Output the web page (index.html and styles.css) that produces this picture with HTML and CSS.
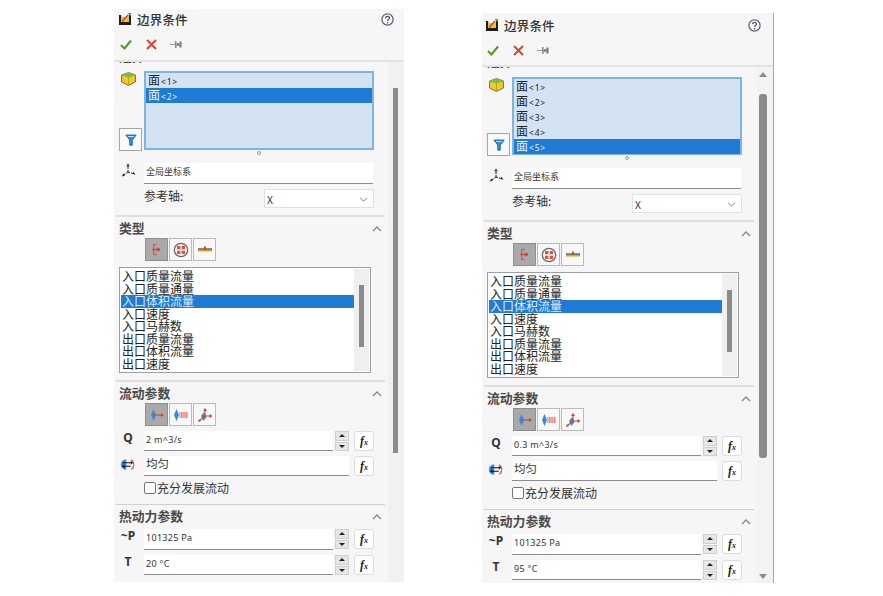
FILE: index.html
```html
<!DOCTYPE html>
<html lang="zh">
<head>
<meta charset="utf-8">
<title>边界条件</title>
<link rel="stylesheet" href="styles.css">
</head>
<body>
<svg class="defs" aria-hidden="true">
  <symbol id="i-bc" viewBox="0 0 14 13"><path d="M1 2h2.200v7h7.600V2H13v10H1z" fill="#1d1d1d"/><rect x="3.200" y="4" width="7.600" height="5" fill="#f0c419"/><path d="M4 8.500L10 2" stroke="#d9402a" stroke-width="1.400"/><path d="M9.500 0h3.500v3.500z" fill="#4fa02f"/></symbol>
  <symbol id="i-help" viewBox="0 0 13 13"><circle cx="6.500" cy="6.500" r="5.600" fill="#fff" stroke="#5c6670" stroke-width="1.300"/><path d="M4.600 5.200c0-2.500 3.900-2.500 3.900-.2 0 1.400-2 1.500-2 3" fill="none" stroke="#47525c" stroke-width="1.300"/><rect x="5.800" y="9" width="1.400" height="1.400" fill="#47525c"/></symbol>
  <symbol id="i-check" viewBox="0 0 12 11"><path d="M1 6l3.500 3.500L11 1.500" fill="none" stroke="#4f9a1f" stroke-width="2"/></symbol>
  <symbol id="i-x" viewBox="0 0 11 11"><path d="M1 1l9 9M10 1l-9 9" stroke="#d8412b" stroke-width="1.900"/></symbol>
  <symbol id="i-pin" viewBox="0 0 12 9"><path d="M0 4.500h5.500" stroke="#999" stroke-width="1"/><rect x="5" y="1" width="1.500" height="7" fill="#888"/><rect x="6.500" y="3" width="3" height="3" fill="#888"/><rect x="9.500" y="1.500" width="2" height="6" fill="#777"/></symbol>
  <symbol id="i-cube" viewBox="0 0 15 14"><path d="M7.500 .6l6.900 2.400v7l-6.900 3.500L.6 10V3z" fill="#f3c92a" stroke="#55523a" stroke-width=".8"/><path d="M7.500 .8L14.200 3 7.500 6 .8 3z" fill="#79c043"/><path d="M7.500 6v7.500" stroke="#c9a11c"/></symbol>
  <symbol id="i-filter" viewBox="0 0 12 12"><path d="M.8 1h10.400L7.300 6v5.200H4.700V6z" fill="#2f8de4" stroke="#125ea8" stroke-width=".8"/><path d="M3 2.500h6" stroke="#bfe0fb"/></symbol>
  <symbol id="i-axes" viewBox="0 0 15 15"><path d="M7 9V2M7 9l6.500 2M7 9l-5 3.500" stroke="#222" stroke-width="1" stroke-dasharray="2 1"/><path d="M7 .5L5.300 3.500h3.400zM14.500 11.500l-3-.4.8-2.300zM1 13.500l1.200-3 1.800 2z" fill="#222"/><circle cx="7" cy="9" r="1.100" fill="#c8352b"/></symbol>
  <symbol id="i-inlet" viewBox="0 0 14 14"><path d="M3.500 1.500v11M3.500 1.500h3M3.500 12.500h3" stroke="#d8412b" fill="none" stroke-width="1"/><path d="M2 7h6" stroke="#d8412b" stroke-width="1.500"/><path d="M7.500 4.500l3.500 2.500-3.500 2.500z" fill="#e2342a"/></symbol>
  <symbol id="i-fan" viewBox="0 0 16 16"><circle cx="8" cy="8" r="6.700" fill="#f4f4f4" stroke="#6a6a6a" stroke-width="1.300"/><path d="M4 4h3.400v3.300H4zM8.600 4H12v3.300H8.600zM4 8.700h3.400V12H4zM8.600 8.700H12V12H8.600z" fill="#e5533f"/></symbol>
  <symbol id="i-wall" viewBox="0 0 16 8"><rect x="1" y="3.500" width="14" height="2" fill="#d9ac1f"/><path d="M1 3h14" stroke="#222"/><path d="M8 .5v2.500" stroke="#d8412b" stroke-width="2"/></symbol>
  <symbol id="i-normal" viewBox="0 0 16 16"><path d="M4.500 2l2.500 6-2.500 6L2 8z" fill="#2e8de6"/><path d="M4.500 8H14" stroke="#d8412b" stroke-width="1.100"/><path d="M12 6l3 2-3 2z" fill="#d8412b"/></symbol>
  <symbol id="i-swirl" viewBox="0 0 16 16"><path d="M3.500 2l2.500 6-2.500 6L1 8z" fill="#2e8de6"/><path d="M6 6h9M6 8h9M6 10h9" stroke="#ea6a5d" stroke-width=".9"/><path d="M8.500 5v6M11 5v6M13.500 5v6" stroke="#ea6a5d" stroke-width=".7"/></symbol>
  <symbol id="i-3d" viewBox="0 0 16 16"><path d="M7 5l2.500 5-3 4-2.500-5z" fill="#2e8de6"/><path d="M8 9V2.500M8 9h6M8 9l-6 5" stroke="#d8412b" stroke-width="1.100"/><path d="M8 1L6 4h4zM15.500 9l-3-2v4zM1 15l1-3 2 2z" fill="#d8412b"/></symbol>
  <symbol id="i-uni" viewBox="0 0 18 14"><path d="M7 1A6 6 0 0 0 7 13z" fill="#2e8de6"/><path d="M12.500 1.500a6.500 6.500 0 0 1 0 11" fill="none" stroke="#e0473a" stroke-width="1.200"/><path d="M3 5h9M3 9h9" stroke="#111" stroke-width="1.200"/><path d="M12 3l3 2-3 2zM5 7L2 9l3 2z" fill="#111"/></symbol>
  <symbol id="i-chev" viewBox="0 0 10 6"><path d="M1 5l4-4 4 4" fill="none" stroke="#888" stroke-width="1.300"/></symbol>
  <symbol id="i-down" viewBox="0 0 10 6"><path d="M1 1l4 4 4-4" fill="none" stroke="#666" stroke-width="1"/></symbol>
</svg>

<main class="page">
  <section class="panel panel-a">
    <header class="head">
      <div class="title-row"><svg class="ic14"><use href="#i-bc"/></svg><h1 class="title">边界条件</h1><svg class="ic-help"><use href="#i-help"/></svg></div>
      <div class="tools"><svg class="ic-check"><use href="#i-check"/></svg><svg class="ic-x"><use href="#i-x"/></svg><svg class="ic-pin"><use href="#i-pin"/></svg></div>
    </header>
    <div class="body">
      <div class="content">
        <div class="sec-head clipped">选择</div>
        <div class="sel">
          <div class="side side-col"><svg class="ic-cube"><use href="#i-cube"/></svg><span class="filter"><svg class="ic12"><use href="#i-filter"/></svg></span></div>
          <ul class="faces">
            <li class="face">面<small>&lt;1&gt;</small></li>
            <li class="face on">面<small>&lt;2&gt;</small></li>
          </ul>
        </div>
        <div class="grip"><i></i></div>
        <div class="row"><span class="side side-top"><svg class="ic-axes"><use href="#i-axes"/></svg></span><div class="field field-full small">全局坐标系</div></div>
        <div class="row ref"><label class="ref-label">参考轴:</label><div class="select">X<svg class="ic-down"><use href="#i-down"/></svg></div></div>
        <hr class="sep">
        <div class="sec-head">类型<svg class="ic-chev"><use href="#i-chev"/></svg></div>
        <div class="btns"><span class="btn active"><svg class="ic14"><use href="#i-inlet"/></svg></span><span class="btn"><svg class="ic16"><use href="#i-fan"/></svg></span><span class="btn"><svg class="ic-wall"><use href="#i-wall"/></svg></span></div>
        <div class="types">
          <ul class="type-list">
            <li>入口质量流量</li><li>入口质量通量</li><li class="on">入口体积流量</li><li>入口速度</li><li>入口马赫数</li><li>出口质量流量</li><li>出口体积流量</li><li>出口速度</li>
          </ul>
          <div class="mini-bar"><i></i></div>
        </div>
        <hr class="sep">
        <div class="sec-head">流动参数<svg class="ic-chev"><use href="#i-chev"/></svg></div>
        <div class="btns"><span class="btn active"><svg class="ic16"><use href="#i-normal"/></svg></span><span class="btn"><svg class="ic16"><use href="#i-swirl"/></svg></span><span class="btn"><svg class="ic16"><use href="#i-3d"/></svg></span></div>
        <div class="row gap5"><b class="side sym">Q</b><div class="field num">2 m^3/s</div><div class="spin"><i class="up"></i><i class="dn"></i></div><span class="fx"><em>f</em><sub>x</sub></span></div>
        <div class="row gap5"><span class="side"><svg class="ic-uni"><use href="#i-uni"/></svg></span><div class="field wide cjk">均匀</div><span class="fx"><em>f</em><sub>x</sub></span></div>
        <div class="check"><span class="box"></span>充分发展流动</div>
        <hr class="sep thin">
        <div class="sec-head">热动力参数<svg class="ic-chev"><use href="#i-chev"/></svg></div>
        <div class="row gap4"><b class="side sym">~P</b><div class="field num tall">101325 Pa</div><div class="spin"><i class="up"></i><i class="dn"></i></div><span class="fx"><em>f</em><sub>x</sub></span></div>
        <div class="row gap5"><b class="side sym">T</b><div class="field num">20 °C</div><div class="spin"><i class="up"></i><i class="dn"></i></div><span class="fx"><em>f</em><sub>x</sub></span></div>
      </div>
      <div class="sb"><i class="thumb"></i></div>
    </div>
  </section>

  <section class="panel panel-b">
    <header class="head">
      <div class="title-row"><svg class="ic14"><use href="#i-bc"/></svg><h1 class="title">边界条件</h1><svg class="ic-help"><use href="#i-help"/></svg></div>
      <div class="tools"><svg class="ic-check"><use href="#i-check"/></svg><svg class="ic-x"><use href="#i-x"/></svg><svg class="ic-pin"><use href="#i-pin"/></svg></div>
    </header>
    <div class="body">
      <div class="content">
        <div class="sec-head clipped">选择</div>
        <div class="sel">
          <div class="side side-col"><svg class="ic-cube"><use href="#i-cube"/></svg><span class="filter"><svg class="ic12"><use href="#i-filter"/></svg></span></div>
          <ul class="faces">
            <li class="face">面<small>&lt;1&gt;</small></li>
            <li class="face">面<small>&lt;2&gt;</small></li>
            <li class="face">面<small>&lt;3&gt;</small></li>
            <li class="face">面<small>&lt;4&gt;</small></li>
            <li class="face on">面<small>&lt;5&gt;</small></li>
          </ul>
        </div>
        <div class="grip"><i></i></div>
        <div class="row"><span class="side side-top"><svg class="ic-axes"><use href="#i-axes"/></svg></span><div class="field field-full small">全局坐标系</div></div>
        <div class="row ref"><label class="ref-label">参考轴:</label><div class="select">X<svg class="ic-down"><use href="#i-down"/></svg></div></div>
        <hr class="sep">
        <div class="sec-head">类型<svg class="ic-chev"><use href="#i-chev"/></svg></div>
        <div class="btns"><span class="btn active"><svg class="ic14"><use href="#i-inlet"/></svg></span><span class="btn"><svg class="ic16"><use href="#i-fan"/></svg></span><span class="btn"><svg class="ic-wall"><use href="#i-wall"/></svg></span></div>
        <div class="types">
          <ul class="type-list">
            <li>入口质量流量</li><li>入口质量通量</li><li class="on">入口体积流量</li><li>入口速度</li><li>入口马赫数</li><li>出口质量流量</li><li>出口体积流量</li><li>出口速度</li>
          </ul>
          <div class="mini-bar"><i></i></div>
        </div>
        <hr class="sep">
        <div class="sec-head">流动参数<svg class="ic-chev"><use href="#i-chev"/></svg></div>
        <div class="btns"><span class="btn active"><svg class="ic16"><use href="#i-normal"/></svg></span><span class="btn"><svg class="ic16"><use href="#i-swirl"/></svg></span><span class="btn"><svg class="ic16"><use href="#i-3d"/></svg></span></div>
        <div class="row gap5"><b class="side sym">Q</b><div class="field num">0.3 m^3/s</div><div class="spin"><i class="up"></i><i class="dn"></i></div><span class="fx"><em>f</em><sub>x</sub></span></div>
        <div class="row gap5"><span class="side"><svg class="ic-uni"><use href="#i-uni"/></svg></span><div class="field wide cjk">均匀</div><span class="fx"><em>f</em><sub>x</sub></span></div>
        <div class="check"><span class="box"></span>充分发展流动</div>
        <hr class="sep thin">
        <div class="sec-head">热动力参数<svg class="ic-chev"><use href="#i-chev"/></svg></div>
        <div class="row gap4"><b class="side sym">~P</b><div class="field num tall">101325 Pa</div><div class="spin"><i class="up"></i><i class="dn"></i></div><span class="fx"><em>f</em><sub>x</sub></span></div>
        <div class="row gap5"><b class="side sym">T</b><div class="field num">95 °C</div><div class="spin"><i class="up"></i><i class="dn"></i></div><span class="fx"><em>f</em><sub>x</sub></span></div>
      </div>
      <div class="sb"><i class="arrow-up"></i><i class="thumb"></i><i class="arrow-dn"></i></div>
    </div>
  </section>
</main>
</body>
</html>
```

FILE: styles.css
```css
* { box-sizing: border-box; }
html, body { margin: 0; height: 100%; background: #fff; overflow: hidden; }
body { font-family: "Noto Sans", "Noto Sans CJK SC", sans-serif; color: #2b2b2b; }
.defs { position: absolute; width: 0; height: 0; }
.page { display: flex; align-items: flex-start; padding-left: 114px; gap: 78px; }

.panel { background: #f6f6f6; display: flex; flex-direction: column; overflow: hidden; }
.panel-a { width: 290px; height: 573px; margin-top: 9px; }
.panel-b { width: 292px; height: 570px; margin-top: 13px; border-right: 1px solid #a8a8a8; }

.head { height: 53px; flex: none; padding: 2px 0 0 4px; border-bottom: 2px solid #e2e2e2; }
.panel-b .head { height: 54px; padding: 4px 0 0 3px; }
.title-row { display: flex; align-items: center; height: 17px; }
.title { margin: 0 0 0 5px; font: 500 12.5px/17px "Noto Sans CJK SC", sans-serif; color: #333; letter-spacing: .2px; }
.ic14 { width: 14px; height: 13px; flex: none; }
.ic-help { width: 13px; height: 13px; margin-left: auto; margin-right: 10px; }
.panel-b .ic-help { margin-right: 12px; }
.tools { display: flex; align-items: center; height: 12px; margin-top: 10px; padding-left: 2px; }
.ic-check { width: 12px; height: 11px; }
.ic-x { width: 11px; height: 11px; margin-left: 14px; }
.ic-pin { width: 12px; height: 9px; margin-left: 13px; }

.body { flex: 1; display: flex; min-height: 0; }
.content { width: 274px; flex: none; overflow: hidden; }
.panel-b .content { width: 275px; }
.sb { flex: 1; background: #f1f1f1; display: flex; flex-direction: column; align-items: center; padding-top: 26px; padding-right: 2px; }
.thumb { display: block; width: 5px; height: 365px; background: #8b8b8b; flex: none; }
.panel-b .sb { padding-top: 5px; padding-right: 4px; background: #f3f3f3; }
.panel-b .thumb { width: 8px; height: 364px; margin-top: 17px; border-radius: 3px; }
.arrow-up, .arrow-dn { display: block; width: 0; height: 0; flex: none; border: 4px solid transparent; border-top: 0; border-bottom: 5px solid #8b8b8b; }
.arrow-dn { border-bottom: 0; border-top: 5px solid #8b8b8b; margin-top: 116px; }

.sec-head { display: flex; align-items: center; justify-content: space-between; height: 20px; padding: 1px 6px 0 5px; font: 600 12.8px/20px "Noto Sans CJK SC", sans-serif; color: #4a4a4a; }
.sec-head.clipped { margin-top: -17px; }
.ic-chev { width: 10px; height: 6px; margin-top: 2px; }

.sel { display: flex; margin-top: 6px; }
.panel-b .sel { margin-top: 7px; }
.side { width: 30px; flex: none; display: flex; padding-left: 7px; align-items: center; }
.side-top { align-items: flex-start; }
.side-col { flex-direction: column; justify-content: space-between; align-items: flex-start; padding-left: 5px; }
.ic-cube { width: 15px; height: 14px; margin: 1px 0 0 2px; }
.filter { width: 23px; height: 23px; background: #f9f9f9; border: 1px solid #a5a5a5; display: flex; align-items: center; justify-content: center; margin-bottom: -1px; }
.ic12 { width: 12px; height: 12px; }
.faces { list-style: none; margin: 0; padding: 0; width: 230px; height: 79px; background: #d3e3f4; border: 2px solid #7db4e6; }
.panel-b .faces { height: 78px; }
.face { height: 15px; padding-left: 2px; font: 12px/14px "Noto Sans CJK SC", sans-serif; color: #222; white-space: nowrap; }
.face small { font: 8.500px/14px "Noto Sans", sans-serif; margin-left: 1px; letter-spacing: .8px; }
.face.on { background: #1f7bd4; color: #e8f2fc; }

.grip { height: 13px; width: 260px; display: flex; justify-content: center; padding-left: 30px; }
.grip i { width: 4px; height: 4px; border: 1px solid #999; border-radius: 50%; margin-top: 1px; }

.row { display: flex; }
.gap5 { margin-top: 5px; }
.gap4 { margin-top: 4px; }
.field { background: #fff; border-bottom: 1px solid #8c8c8c; height: 20px; padding-left: 2px; font-size: 9px; line-height: 17px; color: #333; width: 189px; }
.field-full { width: 229px; height: 21px; }
.small { font: 9px/17px "Noto Sans CJK SC", sans-serif; }
.wide { width: 205px; }
.cjk { font: 11.500px/15px "Noto Sans CJK SC", sans-serif; }
.num { letter-spacing: .3px; }
.tall { height: 21px; }
.ic-axes { width: 15px; height: 15px; }
.ic-uni { width: 16px; height: 13px; margin: 0 0 3px -1px; }
.ref { margin-top: 5px; height: 19px; }
.ref-label { width: 150px; padding-left: 30px; font: 12px/14px "Noto Sans CJK SC", sans-serif; color: #333; }
.select { width: 110px; height: 19px; background: #fff; border: 1px solid #e0e0e0; display: flex; align-items: center; justify-content: space-between; padding: 2px 5px 0 2px; font-size: 10px; }
.ic-down { width: 9px; height: 5px; }

.sep { border: 0; height: 2px; background: #dedede; margin: 7px 3px 0 2px; }
.sep.thin { height: 1px; background: #cfcfcf; margin-top: 9px; }

.btns { display: flex; gap: 1px; padding-left: 31px; margin-top: 1px; }
.btn { width: 23px; height: 23px; background: #f8f8f8; border: 1px solid #bbb; display: flex; align-items: center; justify-content: center; }
.btn.active { background: #a9a9a9; border-color: #8e8e8e; }
.ic16 { width: 16px; height: 16px; }
.ic-wall { width: 16px; height: 8px; }

.types { display: flex; width: 252px; height: 106px; margin: 6px 0 0 5px; background: #fff; border: 1px solid #9aa0a6; padding: 1px; }
.type-list { list-style: none; margin: 0; padding: 1px 0 0; width: 233px; flex: none; font: 12px/12.500px "Noto Sans CJK SC", sans-serif; color: #222; }
.type-list li { height: 12.500px; padding-left: 1px; white-space: nowrap; }
.type-list .on { background: #1f7bd4; color: #dcebfb; }
.mini-bar { width: 15px; background: #efefef; display: flex; justify-content: center; padding-top: 16px; }
.mini-bar i { display: block; width: 5px; height: 62px; background: #8b8b8b; }

.sym { padding: 0 2px 0 0; justify-content: center; font: 700 12px/14px "Noto Sans", sans-serif; color: #333; align-items: flex-start; }
.spin { width: 14px; height: 20px; margin-left: 2px; display: flex; flex-direction: column; gap: 1px; flex: none; }
.spin i { flex: 1; background: #e6e6e6; border: 1px solid #cfcfcf; display: flex; align-items: center; justify-content: center; }
.spin i::after { content: ""; border: 3.500px solid transparent; }
.spin .up::after { border-top: 0; border-bottom: 3.500px solid #222; }
.spin .dn::after { border-bottom: 0; border-top: 3.500px solid #222; }
.fx { width: 20px; height: 20px; margin-left: 5px; background: #fff; border: 1px solid #dcdcdc; border-radius: 3px; display: flex; align-items: center; justify-content: center; flex: none; font: italic 700 12px/1 "Liberation Serif", serif; color: #222; }
.fx em { font-style: italic; }
.fx sub { font-size: 8px; line-height: 1; vertical-align: baseline; margin-top: 3px; }

.check { display: flex; align-items: center; height: 14px; margin-top: 5px; padding-left: 30px; font: 12px/14px "Noto Sans CJK SC", sans-serif; color: #333; }
.box { width: 12px; height: 12px; margin-right: 1px; background: #fff; border: 1px solid #777; border-radius: 2px; flex: none; }
```
